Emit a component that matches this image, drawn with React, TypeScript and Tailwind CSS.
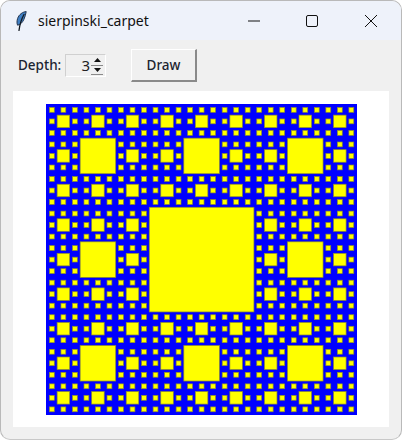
import React from "react";

type R = { x: number; y: number; s: number };

function carpet(x: number, y: number, size: number, depth: number, out: R[]) {
  if (depth === 0) return;
  const t = size / 3;
  out.push({ x: x + t, y: y + t, s: t });
  for (let i = 0; i < 3; i++) {
    for (let j = 0; j < 3; j++) {
      if (i === 1 && j === 1) continue;
      carpet(x + i * t, y + j * t, t, depth - 1, out);
    }
  }
}

function Feather() {
  return (
    <svg width="11" height="20" viewBox="0 0 11 20" className="block">
      <path d="M10.2 0.6C6.8 0.8 3 3.4 1.6 7.5.8 10 .8 12.5 1.6 14.2c2.6-.4 4.8-2.6 6.2-5.6 1.2-2.6 2-5.4 2.4-8z" fill="#3f7fc4" stroke="#24344e" strokeWidth="1" />
      <path d="M8 3.5C6 7 4.2 10.5 3 19.5" fill="none" stroke="#101820" strokeWidth="1.3" strokeLinecap="round" />
    </svg>
  );
}

export default function App() {
  const rects: R[] = [];
  carpet(0, 0, 311, 4, rects);
  return (
    <div className="w-[402px] h-[440px] bg-white overflow-hidden" style={{ fontFamily: "'Noto Sans', 'Open Sans', sans-serif" }}>
      <div className="w-full h-full flex flex-col rounded-[10px] border border-[#b9b9b9] border-b-[#c8c8c8] overflow-hidden bg-[#f0f0f0]">
        <div className="h-[39px] shrink-0 bg-[#eef2fa] flex items-center">
          <div className="w-[11px] ml-[15px] flex items-center justify-center">
            <Feather />
          </div>
          <span className="ml-[11px] text-[14px] text-[#111111] leading-none">sierpinski_carpet</span>
          <div className="ml-auto flex items-center h-full">
            <svg width="12" height="12" viewBox="0 0 12 12" className="mr-[46px]">
              <path d="M0 6h12" stroke="#111" strokeWidth="1" />
            </svg>
            <svg width="12" height="12" viewBox="0 0 12 12" className="mr-[47px]">
              <rect x="0.5" y="0.5" width="11" height="11" rx="1.5" fill="none" stroke="#111" strokeWidth="1" />
            </svg>
            <svg width="12" height="12" viewBox="0 0 12 12" className="mr-[24px]">
              <path d="M0 0l12 12M12 0L0 12" stroke="#111" strokeWidth="1" />
            </svg>
          </div>
        </div>
        <div className="h-[51px] shrink-0 flex items-center pl-[17px]">
          <span className="text-[13.5px] font-medium text-[#1c2430] leading-none w-[46px]">Depth:</span>
          <div className="ml-[1px] w-[41px] h-[23px] bg-[#f0f0f0] border border-[#d0d0d0] border-b-white border-r-white flex items-stretch">
            <span className="flex-1 text-right text-[15px] leading-[21px] text-[#222222] pr-[1px]">3</span>
            <div className="w-[12px] mr-[2px] flex flex-col py-[1px]">
              <div className="flex-1 flex items-center justify-center border-b border-[#8a8a8a]">
                <svg width="7" height="4" viewBox="0 0 7 4"><path d="M3.5 0L7 4H0z" fill="#111" /></svg>
              </div>
              <div className="flex-1 flex items-center justify-center border-b border-[#8a8a8a]">
                <svg width="7" height="4" viewBox="0 0 7 4"><path d="M3.5 4L0 0h7z" fill="#111" /></svg>
              </div>
            </div>
          </div>
          <div className="ml-[25px] w-[66px] h-[33px] bg-[#f0f0f0] border border-white border-r-[2px] border-b-[2px] border-r-[#8a8a8a] border-b-[#8a8a8a] flex items-center justify-center text-[13.5px] font-medium text-[#1c2430]">
            Draw
          </div>
        </div>
        <div className="w-[376px] h-[336px] ml-[12px] bg-white flex pl-[33px] pt-[13px] shrink-0">
          <svg width="311" height="311" viewBox="0 0 311 311" className="block">
            <rect width="311" height="311" fill="#0000ff" />
            {rects.map((r, i) => (
              <rect key={i} x={r.x - 0.4} y={r.y - 0.4} width={r.s + 1} height={r.s + 1} fill="#ffff00" stroke="#8c8c30" strokeWidth="0.7" />
            ))}
          </svg>
        </div>
      </div>
    </div>
  );
}
